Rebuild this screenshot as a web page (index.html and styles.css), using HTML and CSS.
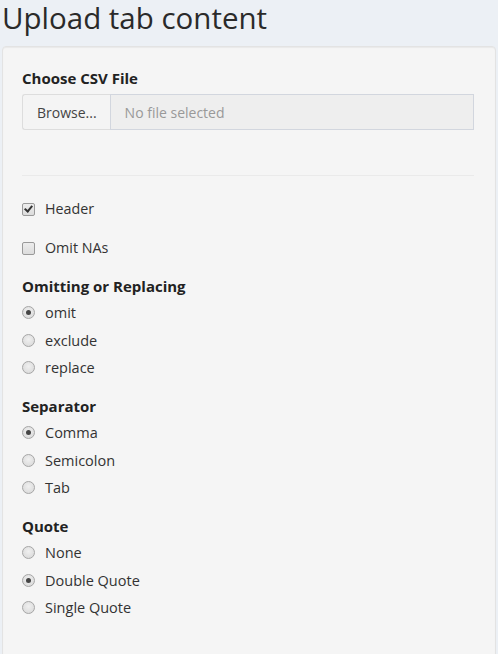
FILE: index.html
```html
<!DOCTYPE html>
<html>
<head>
<meta charset="utf-8">
<link rel="stylesheet" href="styles.css">
</head>
<body>
<h1 class="title">Upload tab content</h1>
<div class="well">
  <div class="file-group">
    <div class="label">Choose CSV File</div>
    <div class="input-group">
      <span class="btn">Browse...</span>
      <span class="file-field">No file selected</span>
    </div>
  </div>
  <hr class="rule">
  <label class="check first"><span class="box checked"></span>Header</label>
  <label class="check second"><span class="box"></span>Omit NAs</label>

  <div class="group">
    <div class="label">Omitting or Replacing</div>
    <div class="option"><span class="radio on"></span>omit</div>
    <div class="option"><span class="radio"></span>exclude</div>
    <div class="option"><span class="radio"></span>replace</div>
  </div>
  <div class="group">
    <div class="label">Separator</div>
    <div class="option"><span class="radio on"></span>Comma</div>
    <div class="option"><span class="radio"></span>Semicolon</div>
    <div class="option"><span class="radio"></span>Tab</div>
  </div>
  <div class="group">
    <div class="label">Quote</div>
    <div class="option"><span class="radio"></span>None</div>
    <div class="option"><span class="radio on"></span>Double Quote</div>
    <div class="option"><span class="radio"></span>Single Quote</div>
  </div>
</div>
</body>
</html>
```
FILE: styles.css
```css
html, body {
  margin: 0;
  padding: 0;
  background: #ecf0f5;
  font-family: "Open Sans", "Liberation Sans", sans-serif;
  font-size: 14px;
  color: #333;
}
.title {
  margin: 0;
  padding: 0 0 0 2px;
  font-weight: 400;
  font-size: 29.5px;
  line-height: 36px;
  height: 46px;
  color: #2a2a2a;
}
.well {
  margin: 0 2px;
  padding: 21px 21px 60px 19px;
  background: #f5f5f5;
  border: 1px solid #e3e3e3;
  border-radius: 4px;
  box-shadow: inset 0 1px 1px rgba(0,0,0,0.05);
}
.label {
  font-weight: 700;
  font-size: 15px;
  line-height: 20px;
  height: 20px;
  color: #222;
}
.file-group .label {
  margin-bottom: 6px;
}
.input-group {
  display: flex;
  height: 36px;
}
.btn {
  display: flex;
  align-items: center;
  padding: 0 13px 0 14px;
  background: #f4f4f4;
  border: 1px solid #ddd;
  border-right: none;
  border-radius: 3px 0 0 3px;
  color: #444;
}
.file-field {
  flex: 1;
  display: flex;
  align-items: center;
  padding: 0 14px;
  background: #eee;
  border: 1px solid #d2d6de;
  color: #999;
}
.rule {
  margin: 45px 0 23px;
  border: 0;
  border-top: 1px solid #eaeaea;
}
.check {
  display: flex;
  align-items: center;
  height: 20px;
  line-height: 20px;
  font-size: 14.3px;
}
.check.second {
  margin-top: 19px;
}
.box {
  width: 11px;
  height: 11px;
  margin-right: 10px;
  border: 1px solid #9a9a9a;
  border-radius: 2px;
  background: linear-gradient(#ededed, #dcdcdc);
  position: relative;
}
.box.checked::after {
  content: "";
  position: absolute;
  left: 3px;
  top: 0px;
  width: 3px;
  height: 6px;
  border: solid #333;
  border-width: 0 2px 2px 0;
  transform: rotate(40deg);
}
.group {
  margin-top: 18px;
}
.group + .group {
  margin-top: 14.5px;
}
.group .label {
  margin-bottom: 3px;
}
.option {
  display: flex;
  align-items: center;
  height: 27.5px;
  font-size: 14.5px;
}
.radio {
  width: 11px;
  height: 11px;
  margin-right: 10px;
  border: 1px solid #a6a6a6;
  border-radius: 50%;
  background: radial-gradient(circle at 50% 40%, #f0f0f0, #d6d6d6);
  position: relative;
}
.radio.on::after {
  content: "";
  position: absolute;
  left: 3px;
  top: 3px;
  width: 5px;
  height: 5px;
  border-radius: 50%;
  background: #444;
}
```
